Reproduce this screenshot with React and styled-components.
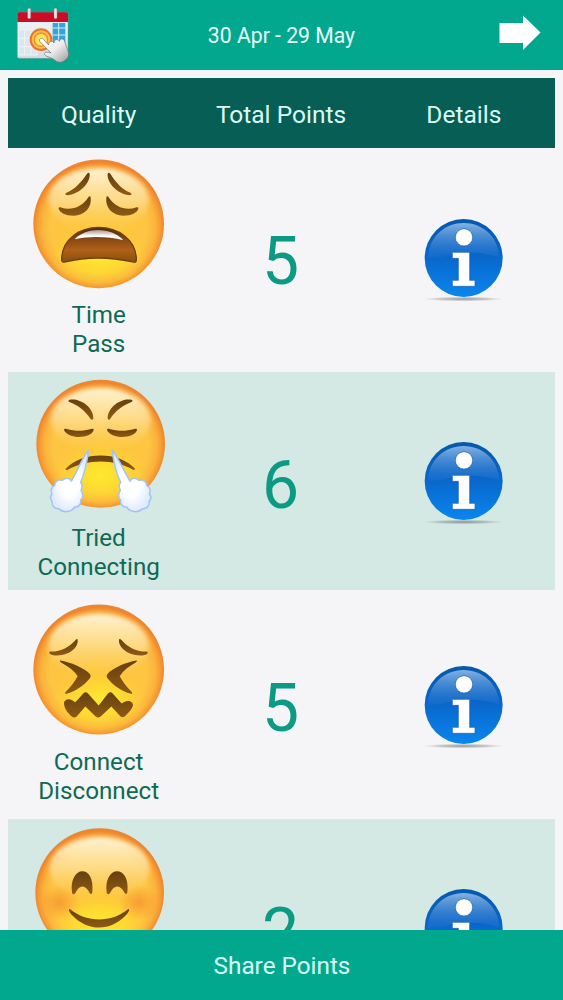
import React from 'react';
import styled, { createGlobalStyle } from 'styled-components';

const GlobalStyle = createGlobalStyle`
  body {
    margin: 0;
    font-family: Roboto, "Noto Sans", sans-serif;
    background: #f5f5f7;
  }
`;

const Screen = styled.div`
  height: 1000px;
  display: flex;
  flex-direction: column;
  overflow: hidden;
  background: #f5f5f7;
`;

const TopBar = styled.header`
  flex: none;
  height: 70px;
  display: grid;
  grid-template-columns: 80px 1fr 80px;
  align-items: center;
  background: #02a88e;
`;

const Period = styled.div`
  text-align: center;
  color: #e6fff8;
  font-size: 21.2px;
  line-height: 28px;
  padding-top: 2px;
`;

const IconButton = styled.button`
  display: block;
  width: 80px;
  height: 70px;
  padding: 0;
  border: 0;
  background: none;
  & > svg {
    display: block;
  }
`;

const Table = styled.main`
  flex: 1;
  min-height: 0;
  padding: 8px 8px 0;
  overflow: hidden;
`;

const TableHead = styled.div`
  height: 70px;
  display: grid;
  grid-template-columns: repeat(3, 1fr);
  align-items: center;
  background: #065e54;
`;

const HeadCell = styled.div`
  text-align: center;
  color: #dcfaf6;
  font-size: 24.5px;
  line-height: 30px;
  padding: 3px 1px 0 0;
  &:last-child {
    padding-right: 0;
  }
`;

const List = styled.div`
  display: flex;
  flex-direction: column;
  gap: 5.5px;
  padding-top: 0.5px;
`;

const Row = styled.div`
  height: 218px;
  display: grid;
  grid-template-columns: repeat(3, 1fr);
  background: ${(props) => (props.$tinted ? '#d4e8e4' : '#f5f5f7')};
`;

const Quality = styled.div`
  display: flex;
  flex-direction: column;
  align-items: center;
  & > svg {
    flex: none;
    display: block;
  }
`;

const Label = styled.div`
  width: 150px;
  padding-right: 1px;
  text-align: center;
  color: #0e6a54;
  font-size: 24.2px;
  line-height: 29px;
  white-space: pre-line;
`;

const Points = styled.div`
  display: flex;
  align-items: center;
  justify-content: center;
  color: #0b9a84;
  font-size: 66px;
  line-height: 76px;
  padding: 9px 2px 0 0;
`;

const Details = styled.div`
  display: flex;
  align-items: center;
  justify-content: center;
`;

const ShareButton = styled.button`
  flex: none;
  height: 70px;
  padding: 2px 0 0 1px;
  border: 0;
  background: #02a88e;
  color: #d9fff6;
  font-family: inherit;
  font-size: 24.3px;
  line-height: 30px;
`;

const CalendarIcon = () => (
  <svg width="80" height="70" viewBox="0 0 240 210">
    <defs>
      <linearGradient id="paper" x1="0" y1="0" x2="0" y2="1">
        <stop offset="0" stopColor="#f4f6f8" />
        <stop offset="1" stopColor="#d5dde2" />
      </linearGradient>
      <linearGradient id="hand" x1="0" y1="0" x2="1" y2="1">
        <stop offset="0" stopColor="#ffffff" />
        <stop offset="0.5" stopColor="#ececec" />
        <stop offset="1" stopColor="#9c9c9e" />
      </linearGradient>
    </defs>
    <rect x="52" y="38" width="152" height="137" rx="6" fill="url(#paper)" stroke="#8b9a9d" strokeWidth="1.5" />
    <path d="M52 66V43q0-6 6-6h140q6 0 6 6v23z" fill="#cb0c27" />
    <path d="M56 90h55v75H56zM56 115h55M56 140h55M74 90v75M93 90v75" fill="#dbe7ed" stroke="#eef3f6" strokeWidth="3" />
    <path d="M158 69h38v72h-38z" fill="#35a4d8" />
    <path d="M158 84h38M158 105h38M176 69v72" stroke="#d5edf7" strokeWidth="3" fill="none" />
    <circle cx="123" cy="119" r="34" fill="#eb712c" />
    <circle cx="123" cy="119" r="28" fill="#ffc04d" />
    <circle cx="123" cy="119" r="22" fill="#ef8930" />
    <circle cx="123" cy="119" r="18" fill="#ffe45b" />
    <path
      d="M119 124c-2-6 1-9 5-9s6 2 8 5l14 15c0-7 3-11 8-11 4 0 6 2 8 5 1-8 4-11 9-10 4 0 6 2 7 5 2-6 5-8 9-7 5 1 7 6 9 13l9 26c2 8 0 15-5 20-6 6-12 11-20 11-7 0-14-4-20-10l-19-8c-9-4-10-10-4-12 5-1 10 0 16 2z"
      fill="url(#hand)"
      stroke="#6e7376"
      strokeWidth="2"
    />
    <rect x="83" y="25" width="9" height="31" rx="4" fill="#e9dfe1" stroke="#9b8285" strokeWidth="1" />
    <rect x="162" y="25" width="9" height="31" rx="4" fill="#e9dfe1" stroke="#9b8285" strokeWidth="1" />
  </svg>
);

const ArrowIcon = () => (
  <svg width="80" height="70" viewBox="483 0 80 70">
    <path d="M499.5 23h23.500v-7.500L540.500 32.500 523 50v-7h-23.500z" fill="#fff" />
  </svg>
);

const SharedDefs = () => (
  <svg width="0" height="0" style={{ display: 'block' }}>
    <defs>
      <filter id="soft" x="-20%" y="-20%" width="140%" height="140%">
        <feGaussianBlur stdDeviation="7" />
      </filter>
      <radialGradient id="face" cx="0.5" cy="0.52" r="0.5">
        <stop offset="0" stopColor="#fdc93a" />
        <stop offset="0.74" stopColor="#fdc542" />
        <stop offset="0.87" stopColor="#fbb43d" />
        <stop offset="0.95" stopColor="#f69a30" />
        <stop offset="1" stopColor="#ec8630" />
      </radialGradient>
      <radialGradient id="chin" cx="0.5" cy="0.5" r="0.5">
        <stop offset="0" stopColor="#fdea2e" />
        <stop offset="0.5" stopColor="#fde22e" stopOpacity="0.7" />
        <stop offset="1" stopColor="#fdd030" stopOpacity="0" />
      </radialGradient>
      <linearGradient id="gloss" x1="0" y1="0" x2="0" y2="1">
        <stop offset="0" stopColor="#fff6dc" stopOpacity="0.95" />
        <stop offset="0.5" stopColor="#fee5a8" stopOpacity="0.65" />
        <stop offset="1" stopColor="#fdd375" stopOpacity="0" />
      </linearGradient>
      <linearGradient id="brown" x1="0" y1="0" x2="0" y2="1">
        <stop offset="0" stopColor="#65400f" />
        <stop offset="1" stopColor="#8f5a14" />
      </linearGradient>
      <linearGradient id="mouth" x1="0" y1="0" x2="0" y2="1">
        <stop offset="0" stopColor="#4c270b" />
        <stop offset="0.35" stopColor="#8a4a12" />
        <stop offset="0.65" stopColor="#b06018" />
        <stop offset="1" stopColor="#84500f" />
      </linearGradient>
      <linearGradient id="teeth" x1="0" y1="0" x2="0" y2="1">
        <stop offset="0" stopColor="#a8938c" />
        <stop offset="0.6" stopColor="#ffffff" />
      </linearGradient>
      <radialGradient id="blush">
        <stop offset="0" stopColor="#f5812a" stopOpacity="0.6" />
        <stop offset="1" stopColor="#f5841f" stopOpacity="0" />
      </radialGradient>
      <radialGradient id="steam">
        <stop offset="0.5" stopColor="#ffffff" />
        <stop offset="1" stopColor="#dfebff" />
      </radialGradient>
      <linearGradient id="info" x1="0" y1="0" x2="0" y2="1">
        <stop offset="0" stopColor="#0558ad" />
        <stop offset="0.5" stopColor="#0868cc" />
        <stop offset="1" stopColor="#0a86ee" />
      </linearGradient>
      <linearGradient id="infoGloss" x1="0" y1="0" x2="0" y2="1">
        <stop offset="0" stopColor="#82b2e2" />
        <stop offset="1" stopColor="#2272d0" stopOpacity="0.35" />
      </linearGradient>
      <radialGradient id="shadow">
        <stop offset="0" stopColor="#666" stopOpacity="0.65" />
        <stop offset="0.6" stopColor="#777" stopOpacity="0.35" />
        <stop offset="1" stopColor="#999" stopOpacity="0" />
      </radialGradient>
    </defs>
  </svg>
);

const Emoji = ({ top, cx, cy, rx, ry, children }) => (
  <svg width="160" height="152" viewBox={`-3 ${top} 480 456`}>
    <ellipse cx={cx} cy={cy} rx={rx} ry={ry} fill="url(#face)" />
    <ellipse cx={cx} cy={cy + 95} rx="150" ry="92" fill="url(#chin)" />
    <ellipse cx={cx} cy={cy - 72} rx="150" ry="95" fill="url(#gloss)" filter="url(#soft)" />
    {children}
  </svg>
);

const WearyFace = () => (
  <Emoji top={-4.5} cx={236} cy={220} rx={196} ry={193}>
    <g fill="url(#brown)">
      <path d="M209 70c3 26-30 63-68 64-6 0-7-4-2-7 28-12 46-34 61-56 4-5 8-5 9-1z" />
      <path d="M263 70c-3 26 30 63 67 64 6 0 6-4 1-7-28-12-45-34-59-56-4-5-8-5-9-1z" />
      <path d="M212 141c4 31-19 54-51 55-25 0-42-10-45-21-1-5 3-6 7-4 31 10 63-1 82-31 3-4 6-3 7 1z" />
      <path d="M259 141c-4 31 19 54 51 55 25 0 42-10 45-21 1-5-3-6-7-4-31 10-63-1-82-31-3-4-6-3-7 1z" />
    </g>
    <path
      d="M125 328c0-62 54-97 111-97s113 35 113 97c0 8-4 8-11 6-74-16-136-16-202 0-7 2-11 0-11-6z"
      fill="url(#mouth)"
      stroke="#6d400e"
      strokeWidth="4"
    />
    <path d="M164 266c35-37 109-38 146 3-43-11-100-13-146-3z" fill="url(#teeth)" />
  </Emoji>
);

const TriumphFace = () => (
  <Emoji top={6} cx={242} cy={221} rx={193} ry={192}>
    <g fill="url(#brown)">
      <path d="M147 90c26-8 73 17 73 55 0 5-6 5-9 1-17-25-37-40-61-49-5-2-6-5-3-7z" />
      <path d="M336 90c-26-8-72 17-73 55 0 5 6 5 8 1 17-25 38-40 62-49 5-2 6-5 3-7z" />
      <path d="M132 180c0-4 4-5 8-3 25 7 49 7 73 0 5-2 9-1 8 4-9 26-77 28-89-1z" />
      <path d="M261 180c0-4 4-5 8-3 25 7 49 7 74 0 5-2 9-1 8 4-9 26-78 28-90-1z" />
      <path d="M137 296c49-53 161-53 208 0 1 4-2 4-6 3-55-33-139-33-195 0-5 2-8 1-7-3z" />
    </g>
    <g fill="url(#steam)" stroke="#a6c3f0" strokeWidth="4.5" strokeLinejoin="round">
      <path d="M206 240c-5 35-10 68-24 97 7 8 5 17 1 24 7 11 6 23-1 29 3 14-8 22-18 21-10 16-34 19-47 5-14 2-22-10-20-21-7-8-7-16-1-23-6-12 0-22 8-26 0-13 12-18 23-15 9-8 20-9 27 2 18-28 32-69 52-93z" />
      <path d="M276 240c5 35 10 68 26 97-7 8-5 17-1 24-7 11-6 23 1 29-3 14 8 22 18 21 10 16 34 19 47 5 14 2 22-10 20-21 7-8 7-16 1-23 6-12 0-22-8-26 0-13-12-18-23-15-9-8-20-9-27 2-18-28-34-69-54-93z" />
    </g>
  </Emoji>
);

const ConfoundedFace = () => (
  <Emoji top={1.5} cx={236} cy={222} rx={196} ry={195}>
    <g fill="url(#brown)">
      <path d="M173 133c3 22-24 47-61 47-19 1-29-7-22-12 34 1 56-13 76-34 4-4 7-4 7-1z" />
      <path d="M297 133c-3 22 27 47 62 47 20 1 29-7 22-12-34 1-56-13-76-34-4-4-8-4-8-1z" />
      <path d="M121 195c29 5 72 22 88 40 4 5 4 9 0 14-15 19-41 38-70 46-4 1-5-3-1-7 14-15 26-29 35-46-12-18-29-29-50-41-4-3-5-6-2-6z" />
      <path d="M349 195c-29 5-71 22-86 40-4 5-4 9 0 14 15 19 41 38 70 46 4 1 5-3 1-7-14-15-26-29-35-46 12-18 28-29 48-41 4-3 5-6 2-6z" />
      <path d="M132 321c2-9 14-13 24-7l10 6 24-26q7-7 14 0l32 36 28-36q7-7 14 0l27 30 9-5c12-7 25 0 25 10-1 8-12 22-24 33q-7 5-14 0l-27-29-32 30q-8 6-15 0l-31-30-26 30q-7 5-14 1c-14-13-24-25-24-43z" />
    </g>
  </Emoji>
);

const SmilingFace = () => (
  <Emoji top={12} cx={239} cy={233} rx={193} ry={193}>
    <ellipse cx="117" cy="263" rx="62" ry="52" fill="url(#blush)" />
    <ellipse cx="358" cy="263" rx="62" ry="52" fill="url(#blush)" />
    <g fill="url(#brown)">
      <path d="M156 232c-5-39 12-63 31-63s34 22 30 63c-1 6-5 7-8 2-12-25-30-27-43 0-4 6-9 5-10-2z" />
      <path d="M260 232c-5-39 12-63 31-63s36 22 31 63c-1 6-5 7-8 2-12-25-31-27-44 0-4 6-9 5-10-2z" />
      <path d="M149 282c53 42 124 42 176 0 5 0 1 9-4 15-49 54-117 54-166 2-7-8-11-17-6-17z" />
    </g>
  </Emoji>
);

const InfoIcon = () => (
  <svg width="110" height="100" viewBox="-3 -6 330 300">
    <ellipse cx="160" cy="267" rx="122" ry="7" fill="url(#shadow)" />
    <circle cx="161" cy="144" r="117" fill="url(#info)" />
    <path d="M54 144C56 80 105 39 161 39s105 41 107 103c-34-9-68-18-106-13-38 3-70 15-108 15z" fill="url(#infoGloss)" />
    <g fill="#fff" stroke="#1b5ea9" strokeWidth="2">
      <circle cx="162" cy="82" r="26" />
      <path d="M127 127h52v84h16v18h-68v-18h18v-66h-18z" />
    </g>
  </svg>
);

const rows = [
  { label: 'Time\nPass', points: 5, Face: WearyFace },
  { label: 'Tried\nConnecting', points: 6, Face: TriumphFace },
  { label: 'Connect\nDisconnect', points: 5, Face: ConfoundedFace },
  { label: '', points: 2, Face: SmilingFace },
];

const App = () => {
  return (
    <Screen>
      <GlobalStyle />
      <SharedDefs />
      <TopBar>
        <IconButton aria-label="Pick dates">
          <CalendarIcon />
        </IconButton>
        <Period>30 Apr - 29 May</Period>
        <IconButton aria-label="Next">
          <ArrowIcon />
        </IconButton>
      </TopBar>
      <Table>
        <TableHead>
          <HeadCell>Quality</HeadCell>
          <HeadCell>Total Points</HeadCell>
          <HeadCell>Details</HeadCell>
        </TableHead>
        <List>
          {rows.map(({ label, points, Face }, i) => (
            <Row key={i} $tinted={i % 2 === 1}>
              <Quality>
                <Face />
                <Label>{label}</Label>
              </Quality>
              <Points>{points}</Points>
              <Details>
                <InfoIcon />
              </Details>
            </Row>
          ))}
        </List>
      </Table>
      <ShareButton>Share Points</ShareButton>
    </Screen>
  );
};

export default App;
